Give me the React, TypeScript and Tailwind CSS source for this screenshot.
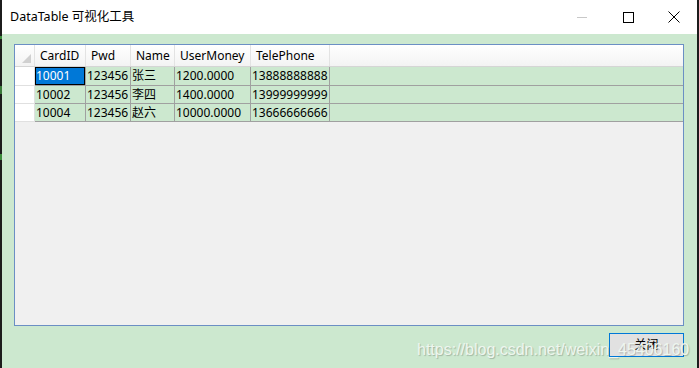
import React from "react";

const cols = [
  { name: "CardID", w: 51 },
  { name: "Pwd", w: 45 },
  { name: "Name", w: 44 },
  { name: "UserMoney", w: 76 },
  { name: "TelePhone", w: 79 },
];

const rows = [
  ["10001", "123456", "张三", "1200.0000", "13888888888"],
  ["10002", "123456", "李四", "1400.0000", "13999999999"],
  ["10004", "123456", "赵六", "10000.0000", "13666666666"],
];

const font = { fontFamily: '"Noto Sans", "Noto Sans CJK SC", sans-serif' };

export default function App() {
  return (
    <div className="w-[699px] h-[368px] flex bg-[#1c1c1c] overflow-hidden text-[12px] text-black" style={font}>
      <div className="w-[2px] flex flex-col bg-[#1c1c1c]">
        <div className="h-[36px]" />
        <div className="h-[3px] bg-[#3c8c3c]" />
        <div className="h-[47px]" />
        <div className="h-[8px] bg-[#3a7a3a]" />
        <div className="h-[60px]" />
        <div className="h-[6px] bg-[#3c8c3c]" />
      </div>
      <div className="w-[695px] flex flex-col">
        <div className="h-[34px] bg-white flex items-center">
          <div className="pl-[8px] text-[12.5px] leading-none flex-1">DataTable 可视化工具</div>
          <div className="w-[46px] h-full flex items-center justify-center">
            <div className="w-[10px] h-px bg-[#c8c8c8]" />
          </div>
          <div className="w-[46px] h-full flex items-center justify-center">
            <div className="w-[11px] h-[11px] border border-black" />
          </div>
          <div className="w-[46px] h-full flex items-center justify-center">
            <svg width="12" height="12" viewBox="0 0 12 12">
              <path d="M0.5 0.5 L11.5 11.5 M11.5 0.5 L0.5 11.5" stroke="black" strokeWidth="1" />
            </svg>
          </div>
        </div>
        <div className="flex-1 bg-[#cce8cf] flex flex-col pt-[10px] pl-[12px] pr-[13px] relative">
          <div className="h-[282px] border border-[#6b8fc4] bg-[#f0f0f0] flex flex-col">
            <div className="h-[22px] flex bg-gradient-to-b from-white to-[#f3f3f3] border-b border-[#d5d5d5]">
              <div className="w-[20px] border-r border-[#e3e3e3] relative">
                <svg className="absolute right-[3px] bottom-[3px]" width="9" height="9" viewBox="0 0 9 9">
                  <path d="M9 0 L9 9 L0 9 Z" fill="#d0d0d0" />
                </svg>
              </div>
              {cols.map((c) => (
                <div
                  key={c.name}
                  className="border-r border-[#e3e3e3] flex items-center pl-[5px] whitespace-nowrap"
                  style={{ width: c.w }}
                >
                  {c.name}
                </div>
              ))}
              <div className="flex-1" />
            </div>
            {rows.map((r, ri) => (
              <div key={ri} className={`flex ${ri === 0 ? "h-[19px]" : "h-[18px]"} bg-[#cce8cf]`}>
                <div className="w-[20px] bg-[#f0f0f0] flex">
                  <div className="w-[20px] bg-white border-r border-b border-[#e0e0e0] h-full" />
                </div>
                {r.map((v, ci) => {
                  const sel = ri === 0 && ci === 0;
                  return (
                    <div
                      key={ci}
                      className={`border-r border-b border-[#a0a0a0] flex items-center whitespace-nowrap overflow-hidden ${
                        sel ? "" : "pl-[1px]"
                      }`}
                      style={{ width: cols[ci].w }}
                    >
                      {sel ? (
                        <div className="w-full h-full bg-[#0078d7] text-white border border-black flex items-center">
                          {v}
                        </div>
                      ) : (
                        v
                      )}
                    </div>
                  );
                })}
                <div className="flex-1 border-b border-[#a0a0a0]" />
              </div>
            ))}
            <div className="flex-1" />
          </div>
          <div className="flex justify-end mt-[7px]">
            <div className="w-[75px] h-[24px] border border-[#0078d7] bg-[#e1e1e1] flex items-center justify-center">
              关闭
            </div>
          </div>
          <div
            className="absolute left-[415px] top-[304px] text-[16px] text-[#eef6ef] whitespace-nowrap z-10"
            style={{ fontFamily: '"Liberation Sans", sans-serif', textShadow: "1px 1px 1px rgba(0,0,0,0.22)" }}
          >
            https://blog.csdn.net/weixin_45406160
          </div>
        </div>
      </div>
      <div className="w-[2px] bg-[#1c1c1c]" />
    </div>
  );
}
